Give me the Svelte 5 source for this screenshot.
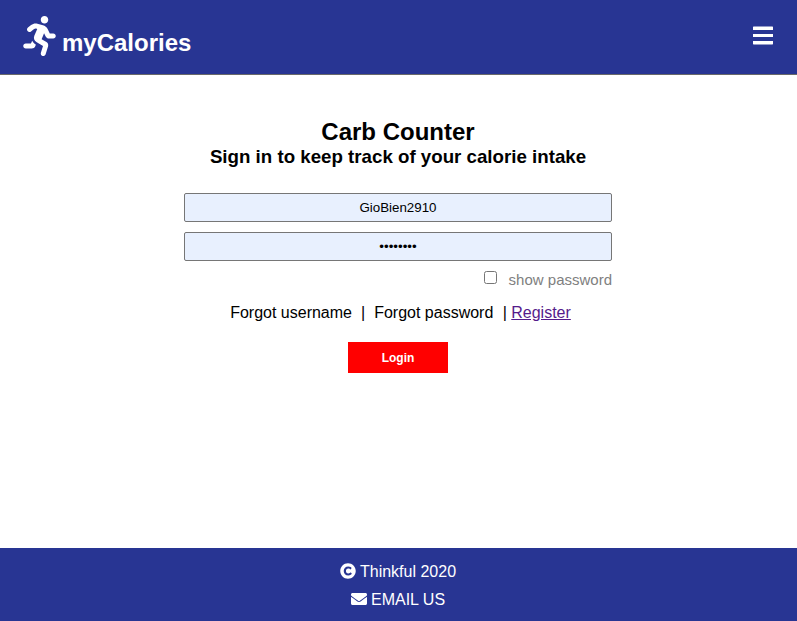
<script>
  let username = $state('GioBien2910');
  let password = $state('password');
  let show = $state(false);
</script>

<div class="page">
  <header>
    <div class="brand">
      <svg class="runner" viewBox="0 0 416 512" aria-hidden="true"><path fill="currentColor" d="M272 96c26.51 0 48-21.49 48-48S298.51 0 272 0s-48 21.49-48 48 21.49 48 48 48zM113.69 317.47l-14.8 34.52H32c-17.67 0-32 14.33-32 32s14.33 32 32 32h77.45c19.25 0 36.58-11.44 44.11-29.09l8.79-20.52-10.67-6.3c-17.32-10.23-30.06-25.37-37.99-42.61zM384 223.99h-44.03l-26.06-53.25c-12.5-25.55-35.45-44.23-61.78-50.94l-71.08-21.14c-28.3-6.8-57.77-.55-80.84 17.14l-39.67 30.41c-14.03 10.75-16.69 30.83-5.94 44.86s30.84 16.69 44.86 5.94l39.66-30.41c7.67-5.89 17.44-8 25.27-6.14l14.7 4.37-37.46 87.39c-12.62 29.48-1.31 64.01 26.3 80.31l84.98 50.17-27.47 87.73c-5.28 16.86 4.11 34.82 20.97 40.09 3.19 1 6.41 1.48 9.58 1.48 13.61 0 26.23-8.77 30.52-22.45l31.64-101.06c5.91-20.77-2.89-43.08-21.64-54.39l-61.24-36.14 31.31-78.28 20.27 41.43c8 16.34 24.92 26.89 43.11 26.89H384c17.67 0 32-14.33 32-32s-14.33-31.99-32-31.99z"/></svg>
      <span class="name">myCalories</span>
    </div>
    <svg class="bars" viewBox="0 0 20 19" role="img" aria-label="Menu"><path fill="currentColor" d="M.5.6h19l.5.4v3H0V1zM0 8h20v3H0zM0 15h20v3l-.5.4H.5L0 18z"/></svg>
  </header>

  <main>
    <h1>Carb Counter</h1>
    <h2>Sign in to keep track of your calorie intake</h2>
    <form onsubmit={(e) => e.preventDefault()}>
      <input class="field" type="text" aria-label="Username" bind:value={username} />
      <input class="field" type={show ? 'text' : 'password'} aria-label="Password" bind:value={password} />
      <label class="show"><input type="checkbox" bind:checked={show} /><span>show password</span></label>
      <div class="links">
        <span>Forgot username</span><span class="bar">|</span><span>Forgot password</span><span class="bar last">|</span><a href="#register">Register</a>
      </div>
      <button type="submit">Login</button>
    </form>
  </main>

  <footer>
    <div class="line">
      <svg viewBox="0 0 512 512" aria-hidden="true"><path fill="currentColor" d="M256 8C119.033 8 8 119.033 8 256s111.033 248 248 248 248-111.033 248-248S392.967 8 256 8zm117.134 346.753c-1.592 1.867-39.776 45.731-109.851 45.731-84.692 0-144.484-63.26-144.484-145.567 0-81.303 62.004-143.401 143.762-143.401 66.957 0 101.965 37.315 103.422 38.904a12 12 0 0 1 1.238 14.623l-22.38 34.655c-4.049 6.267-12.774 7.351-18.234 2.295-.233-.214-26.529-23.88-61.88-23.88-46.116 0-73.916 33.575-73.916 76.082 0 39.602 25.514 79.692 74.277 79.692 38.697 0 65.28-28.338 65.544-28.625 5.132-5.565 14.059-5.033 18.508 1.053l24.547 33.572a12.001 12.001 0 0 1-.553 14.866z"/></svg>
      <span>Thinkful 2020</span>
    </div>
    <div class="line">
      <svg viewBox="0 0 512 512" aria-hidden="true"><path fill="currentColor" d="M502.3 190.8c3.9-3.1 9.7-.2 9.7 4.7V400c0 26.5-21.5 48-48 48H48c-26.5 0-48-21.5-48-48V195.6c0-5 5.7-7.8 9.7-4.7 22.4 17.4 52.1 39.5 154.1 113.6 21.1 15.4 56.7 47.8 92.2 47.6 35.7.3 72-32.8 92.3-47.6 102-74.1 131.6-96.3 154-113.7zM256 320c23.2.4 56.6-29.2 73.4-41.4 132.7-96.3 142.8-104.7 173.4-128.7 5.8-4.5 9.2-11.5 9.2-18.9v-19c0-26.5-21.5-48-48-48H48c-26.5 0-48 21.5-48 48v19c0 7.4 3.4 14.3 9.2 18.9 30.6 23.9 40.7 32.4 173.4 128.7 16.8 12.2 50.2 41.8 73.4 41.4z"/></svg>
      <span>EMAIL US</span>
    </div>
  </footer>
</div>

<style>
  .page {
    height: 621px;
    display: flex;
    flex-direction: column;
    background: #fff;
    color: #000;
    font: 16px/18px "Liberation Sans", Arial, sans-serif;
  }
  header {
    box-sizing: border-box;
    height: 75px;
    flex: none;
    padding: 16px 24px 0 23px;
    display: flex;
    justify-content: space-between;
    align-items: flex-start;
    background: #283593;
    border-bottom: 1px solid #696969;
    color: #fff;
  }
  .brand { display: flex; align-items: flex-start; }
  .runner { width: 33px; height: 40px; }
  .name { margin: 13px 0 0 6px; font-size: 24px; line-height: 28px; font-weight: bold; }
  .bars { width: 20px; height: 19px; margin-top: 10px; }
  main { flex: 1; display: flex; flex-direction: column; align-items: center; padding: 43px 1px 0 0; }
  h1 { margin: 0; font-size: 24px; line-height: 28px; }
  h2 { margin: 0; font-size: 18.72px; line-height: 21px; }
  form { width: 428px; margin-top: 26px; display: flex; flex-direction: column; align-items: center; }
  .field {
    box-sizing: border-box;
    width: 428px;
    height: 29px;
    margin: 0 0 10px;
    padding: 1px 2px;
    border: 1px solid #767676;
    border-radius: 2px;
    background: #e8f0fe;
    color: #000;
    font: 13.333px "Liberation Sans", Arial, sans-serif;
    text-align: center;
    outline: none;
  }
  .show { align-self: flex-end; display: flex; align-items: flex-start; color: #808080; font-size: 15px; line-height: 18px; }
  .show input { width: 13px; height: 13px; margin: 0 11.5px 0 0; }
  .links { display: flex; margin: 15px 0 0 5px; white-space: pre; }
  .bar { margin: 0 9px; }
  .bar.last { margin: 0 4.4px 0 9.4px; }
  a { color: #551a8b; text-decoration: underline; }
  button {
    width: 100px;
    height: 31px;
    margin-top: 20px;
    padding: 0;
    border: 0;
    background: #f00;
    color: #fff;
    font: bold 12px "Liberation Sans", Arial, sans-serif;
  }
  footer {
    box-sizing: border-box;
    height: 73px;
    flex: none;
    padding: 15px 1px 0 0;
    background: #283593;
    color: #fff;
  }
  .line { display: flex; justify-content: center; gap: 4px; height: 18px; margin-bottom: 10px; }
  .line svg { width: 16px; height: 16px; }
</style>
